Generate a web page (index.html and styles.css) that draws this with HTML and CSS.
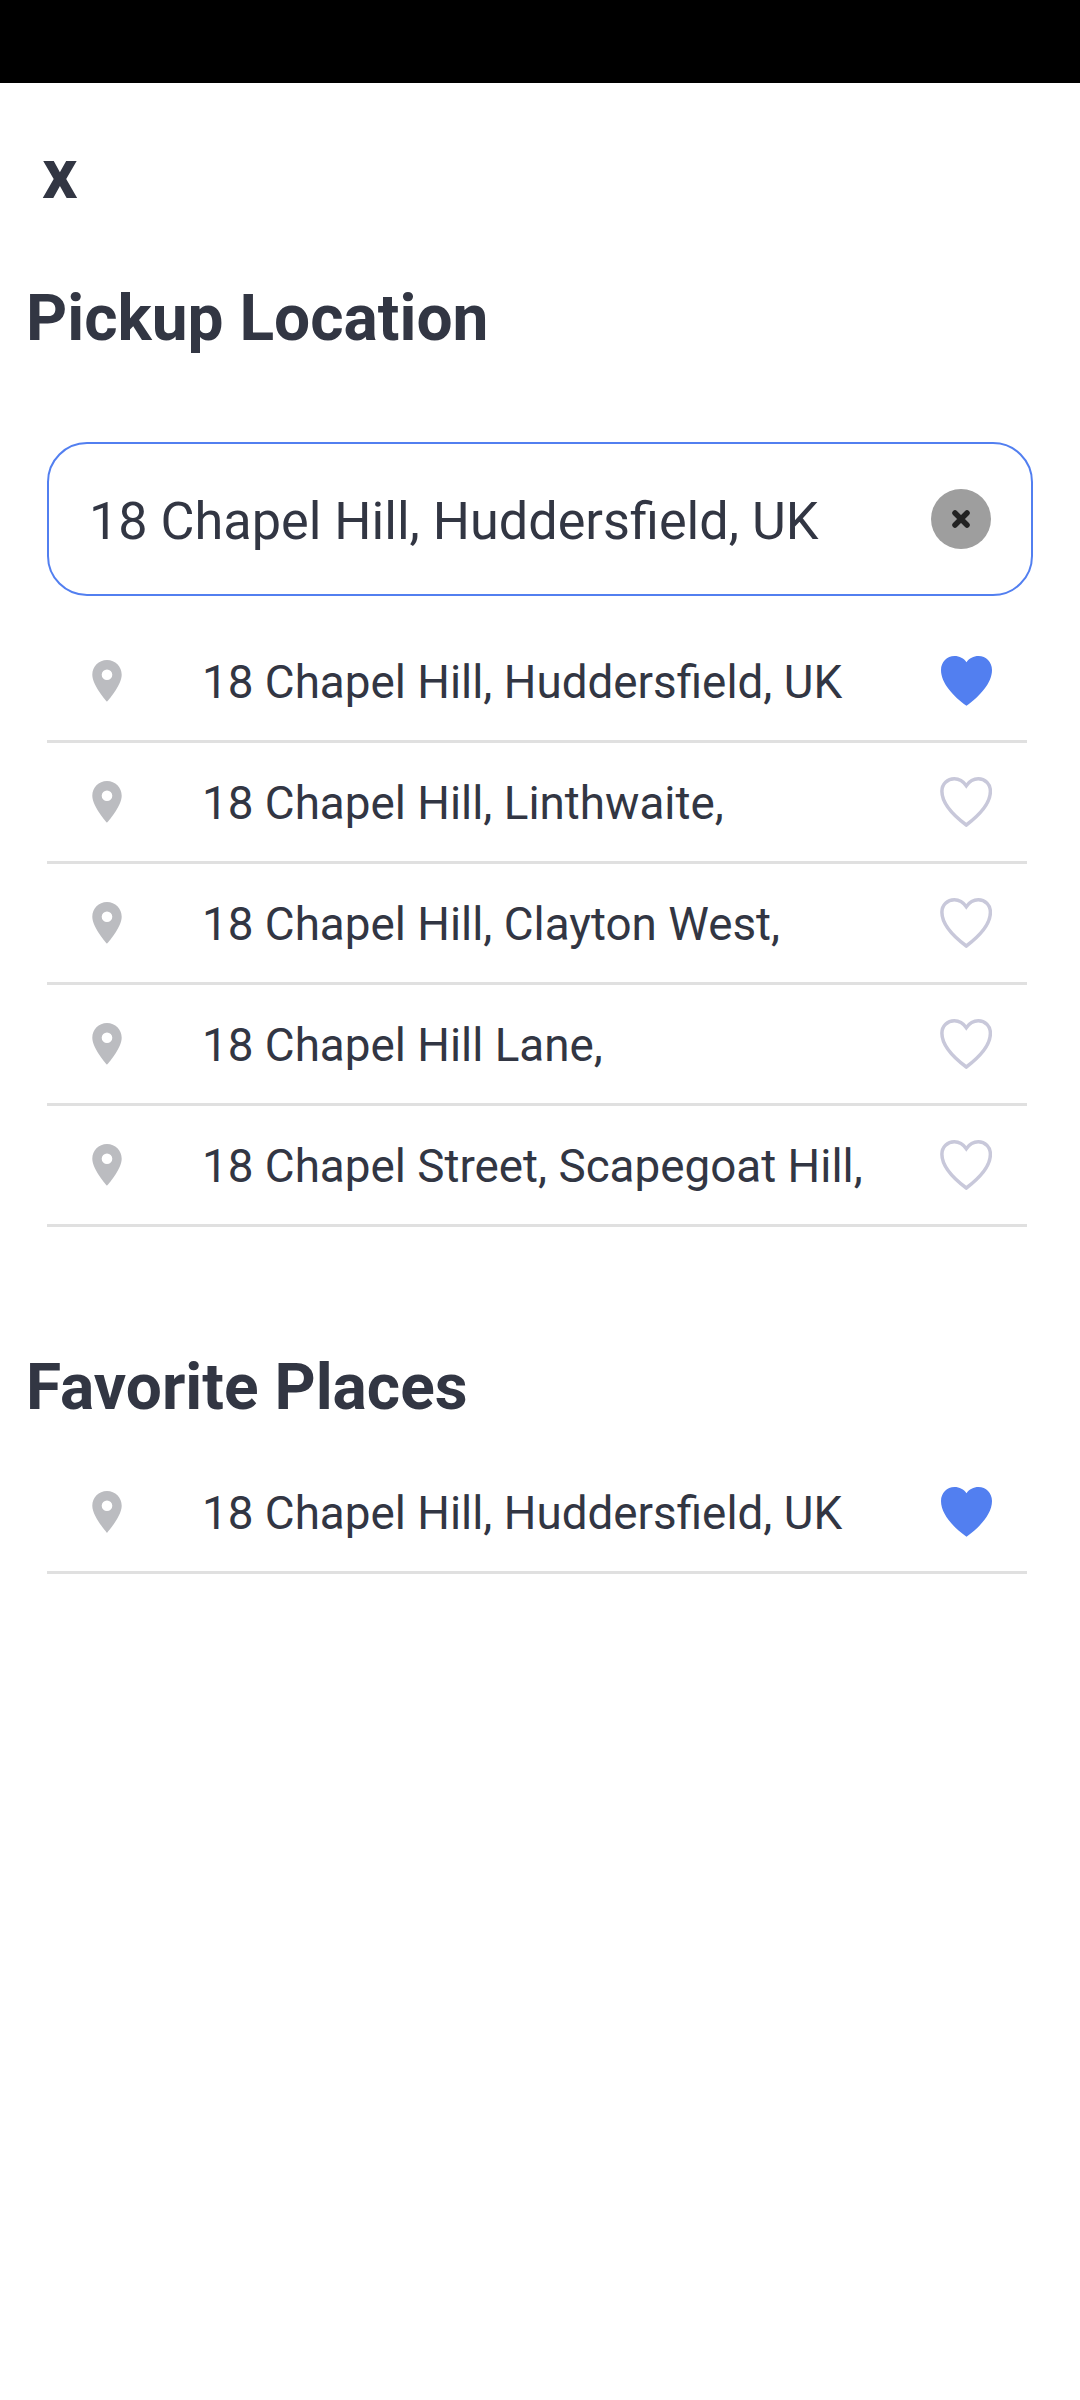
FILE: index.html
```html
<!DOCTYPE html>
<html lang="en">
<head>
<meta charset="utf-8">
<title>Pickup Location</title>
<link rel="stylesheet" href="styles.css">
</head>
<body>
<svg class="defs" width="0" height="0" aria-hidden="true">
  <symbol id="pin" viewBox="0 0 30 42">
    <path fill-rule="evenodd" d="M15 0C6.700 0 .3 6.500.3 14.800.3 25.500 15 41.800 15 41.800S29.700 25.500 29.700 14.800C29.700 6.500 23.300 0 15 0ZM15 9.500A5.300 5.300 0 1 1 15 20.100A5.300 5.300 0 1 1 15 9.500Z"/>
  </symbol>
  <symbol id="heart" viewBox="0 0 52 50">
    <path d="M26.500 49.800C13 40 1 27 1 14C1 6 7 0 14.500 0C19.500 0 23.800 2.300 26.500 6.200C29.200 2.300 33.500 0 38.500 0C46 0 52 6 52 14C52 27 40 40 26.500 49.800Z"/>
  </symbol>
  <symbol id="heart-line" viewBox="0 0 52 50">
    <path d="M26.300 48C13 38 1.900 26 1.900 14.200C1.900 7 7.500 1.800 14.300 1.800C19.800 1.800 23.300 4.400 26.300 8.700C29.300 4.400 32.800 1.800 38.300 1.800C45 1.800 50.400 7 50.400 14.200C50.400 26 39.500 38 26.300 48Z"/>
  </symbol>
</svg>
<div class="status-bar"></div>
<main class="screen">
  <button class="close">x</button>
  <h1 class="title">Pickup Location</h1>
  <div class="search">
    <span class="search-text">18 Chapel Hill, Huddersfield, UK</span>
    <button class="clear" aria-label="Clear">
      <svg class="clear-icon" viewBox="0 0 18 18"><path d="M3 3L15 15M15 3L3 15"/></svg>
    </button>
  </div>
  <ul class="places">
    <li class="place"><svg class="pin"><use href="#pin"/></svg><span class="address">18 Chapel Hill, Huddersfield, UK</span><svg class="heart saved"><use href="#heart"/></svg></li>
    <li class="place"><svg class="pin"><use href="#pin"/></svg><span class="address">18 Chapel Hill, Linthwaite,</span><svg class="heart"><use href="#heart-line"/></svg></li>
    <li class="place"><svg class="pin"><use href="#pin"/></svg><span class="address">18 Chapel Hill, Clayton West,</span><svg class="heart"><use href="#heart-line"/></svg></li>
    <li class="place"><svg class="pin"><use href="#pin"/></svg><span class="address">18 Chapel Hill Lane,</span><svg class="heart"><use href="#heart-line"/></svg></li>
    <li class="place"><svg class="pin"><use href="#pin"/></svg><span class="address">18 Chapel Street, Scapegoat Hill,</span><svg class="heart"><use href="#heart-line"/></svg></li>
  </ul>
  <h2 class="title favorites-title">Favorite Places</h2>
  <ul class="places favorites">
    <li class="place"><svg class="pin"><use href="#pin"/></svg><span class="address">18 Chapel Hill, Huddersfield, UK</span><svg class="heart saved"><use href="#heart"/></svg></li>
  </ul>
</main>
</body>
</html>
```
FILE: styles.css
```css
* { box-sizing: border-box; }
body {
  margin: 0;
  min-height: 2400px;
  background: #fff;
  color: #323643;
  font-family: Roboto, sans-serif;
}
.defs { display: none; }
.status-bar { height: 83px; background: #000; }
.screen { display: flex; flex-direction: column; }
button { border: 0; padding: 0; background: none; color: inherit; font-family: inherit; }
.close {
  align-self: flex-start;
  margin: 60px 0 0 42px;
  font-size: 70px;
  font-weight: 700;
  line-height: 62px;
}
.title {
  margin: 77px 0 0 26px;
  font-size: 64px;
  font-weight: 700;
  line-height: 74px;
}
.search {
  display: flex;
  align-items: center;
  justify-content: space-between;
  width: 986px;
  height: 154px;
  margin: 86px 0 0 47px;
  padding: 0 40px 0 40px;
  border: 2px solid #527ff0;
  border-radius: 40px;
}
.search-text { padding-top: 5px; font-size: 52.2px; line-height: 62px; white-space: nowrap; }
.clear {
  display: flex;
  align-items: center;
  justify-content: center;
  width: 60px;
  height: 60px;
  border-radius: 50%;
  background: #9e9e9e;
}
.clear-icon { width: 18px; height: 18px; fill: none; stroke: #222; stroke-width: 5.5; stroke-linecap: round; }
.places { width: 980px; margin: 26px 0 0 47px; padding: 0; list-style: none; }
.place {
  display: flex;
  align-items: center;
  height: 121px;
  padding: 0 35px 0 45px;
  border-bottom: 3px solid #e0e0e0;
}
.pin { width: 30px; height: 42px; margin-left: 0.3px; fill: #bbbcc0; }
.address { flex: 1; margin-left: 79.7px; padding-top: 4px; font-size: 45.8px; line-height: 54px; white-space: nowrap; }
.heart { width: 52px; height: 50px; fill: none; stroke: #c8c8da; stroke-width: 3.5px; }
.saved { fill: #527ff0; stroke: none; }
.favorites-title { margin-top: 124px; }
.favorites { margin-top: 28px; }
```
